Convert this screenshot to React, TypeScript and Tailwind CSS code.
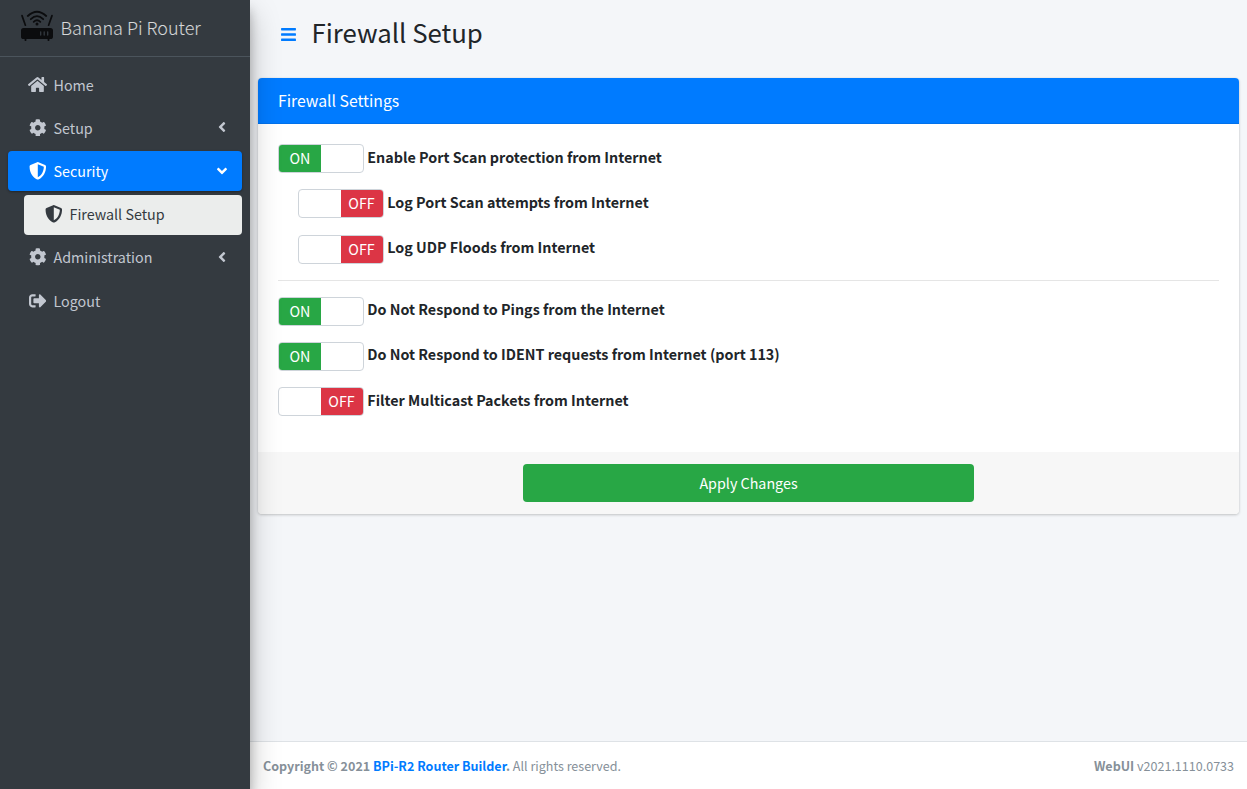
import React from "react";
import { FaAngleDown, FaAngleLeft, FaBars, FaCog, FaHome, FaShieldAlt, FaSignOutAlt } from "react-icons/fa";

type ToggleRowProps = { on: boolean; label: string; indent?: boolean };

function RouterLogo() {
  return (
    <svg viewBox="0 0 34 32" className="h-8 w-[34px] shrink-0" fill="none" stroke="#0b0c0e" strokeLinecap="round">
      <path d="M2 5.6 L5.4 15.2 M32 5.6 L28.6 15.2" strokeWidth="1.7" />
      <path d="M7.8 6 Q17 -2.6 26.2 6" strokeWidth="1.8" />
      <path d="M10.8 9.2 Q17 3 23.2 9.2" strokeWidth="1.8" />
      <path d="M13.7 11.9 Q17 8.6 20.3 11.9" strokeWidth="1.8" />
      <circle cx="17" cy="14" r="1.5" fill="#0b0c0e" stroke="none" />
      <rect x="1" y="18" width="32" height="11" rx="2.6" fill="#0b0c0e" stroke="none" />
      <path d="M5.5 29v1.2 M28.5 29v1.2" strokeWidth="1.8" />
      <path d="M20.7 21.8v3.2 M24.2 21.8v3.2 M27.7 21.8v3.2" stroke="#343a40" strokeWidth="1.3" />
    </svg>
  );
}

function ToggleRow({ on, label, indent }: ToggleRowProps) {
  return (
    <label className={indent ? "flex h-[45.3px] items-start pl-5" : "flex h-[45.3px] items-start"}>
      <span className="flex h-[29px] w-[86px] shrink-0 overflow-hidden rounded border border-[#ced4da] bg-white text-[14.3px] leading-[26.4px] text-white">
        <span className={on ? "w-[42px] bg-[#28a745] text-center" : "w-[42px]"}>{on ? "ON" : ""}</span>
        <span className={on ? "w-[42px]" : "w-[42px] bg-[#dc3545] pr-px text-center"}>{on ? "" : "OFF"}</span>
      </span>
      <span className="-mt-[0.45px] ml-[3.3px] whitespace-nowrap text-[14.32px] leading-[26px] font-bold text-[#212529]">{label}</span>
    </label>
  );
}

function NavItem({ icon, label, arrow, className }: { icon: React.ReactNode; label: string; arrow?: React.ReactNode; className: string }) {
  return (
    <a className={`flex h-10 items-center rounded pr-3 text-[14.3px] ${className}`}>
      <span className="mr-[6.5px] flex w-[19px] justify-center pb-[1px]">{icon}</span>
      <span className="flex-1 pb-[0.8px] leading-6">{label}</span>
      <span className="pb-[1.5px]">{arrow}</span>
    </a>
  );
}

export default function App() {
  return (
    <div className="flex h-[789px] w-full overflow-hidden bg-[#f4f6f9] font-['Noto_Sans_CJK_SC','Noto_Sans',sans-serif]">
      <aside className="z-10 w-[250px] shrink-0 bg-[#343a40] shadow-[0_14px_28px_rgba(0,0,0,0.25),0_10px_10px_rgba(0,0,0,0.22)]">
        <div className="flex h-[57px] items-start border-b border-[#4b545c] pl-5 pt-[10px]">
          <RouterLogo />
          <span className="ml-[6.5px] text-[18px] leading-[35px] font-light text-white/80">Banana Pi Router</span>
        </div>
        <nav className="flex flex-col gap-[3.2px] px-2 pt-2">
          <NavItem className="pl-5 text-[#c2c7d0]" icon={<FaHome size={19} />} label="Home" />
          <NavItem className="pl-5 text-[#c2c7d0]" icon={<FaCog size={17.6} />} label="Setup" arrow={<FaAngleLeft size={16} />} />
          <NavItem
            className="bg-[#007bff] pl-5 text-white shadow-[0_1px_3px_rgba(0,0,0,0.12),0_1px_2px_rgba(0,0,0,0.24)]"
            icon={<FaShieldAlt size={17.6} />}
            label="Security"
            arrow={<FaAngleDown size={16} />}
          />
          <NavItem className="ml-4 bg-[#ebedec] pl-5 text-[#343a40]" icon={<FaShieldAlt size={17.6} />} label="Firewall Setup" />
          <NavItem className="pl-5 text-[#c2c7d0]" icon={<FaCog size={17.6} />} label="Administration" arrow={<FaAngleLeft size={16} />} />
          <NavItem className="pl-5 text-[#c2c7d0]" icon={<FaSignOutAlt size={17.6} />} label="Logout" />
        </nav>
      </aside>

      <div className="flex min-w-0 flex-1 flex-col">
        <main className="flex-1 px-2">
          <header className="flex h-[78px] items-start pl-[22px] pt-[14px]">
            <FaBars size={17} className="mt-[12px] text-[#007bff]" />
            <h1 className="ml-[14.5px] text-[25.75px] leading-[35px] text-[#212529]">Firewall Setup</h1>
          </header>
          <section className="overflow-hidden rounded bg-white shadow-[0_0_1px_rgba(0,0,0,0.125),0_1px_3px_rgba(0,0,0,0.2)]">
            <h2 className="h-[46px] border-b border-[#0071eb] bg-[#007bff] pl-5 text-[15.75px] leading-[45px] text-white">Firewall Settings</h2>
            <div className="h-[328px] px-5 pt-5">
              <ToggleRow on label="Enable Port Scan protection from Internet" />
              <ToggleRow on={false} indent label="Log Port Scan attempts from Internet" />
              <ToggleRow on={false} indent label="Log UDP Floods from Internet" />
              <hr className="mb-[15.7px] border-t border-black/10" />
              <ToggleRow on label="Do Not Respond to Pings from the Internet" />
              <ToggleRow on label="Do Not Respond to IDENT requests from Internet (port 113)" />
              <ToggleRow on={false} label="Filter Multicast Packets from Internet" />
            </div>
            <div className="flex h-[62px] items-center justify-center bg-[#f7f7f7]">
              <button className="h-[38px] w-[451px] rounded bg-[#28a745] text-[14.3px] leading-[38px] text-white">Apply Changes</button>
            </div>
          </section>
        </main>
        <footer className="flex h-12 items-center justify-between border-t border-[#dee2e6] bg-white px-[13px] pt-[2px] text-[12.54px] text-[#869099]">
          <span>
            <b className="font-bold">
              Copyright © 2021 <a className="text-[#007bff]">BPi-R2 Router Builder</a>.
            </b>{" "}
            All rights reserved.
          </span>
          <span>
            <b className="font-bold">WebUI</b> v2021.1110.0733
          </span>
        </footer>
      </div>
    </div>
  );
}
